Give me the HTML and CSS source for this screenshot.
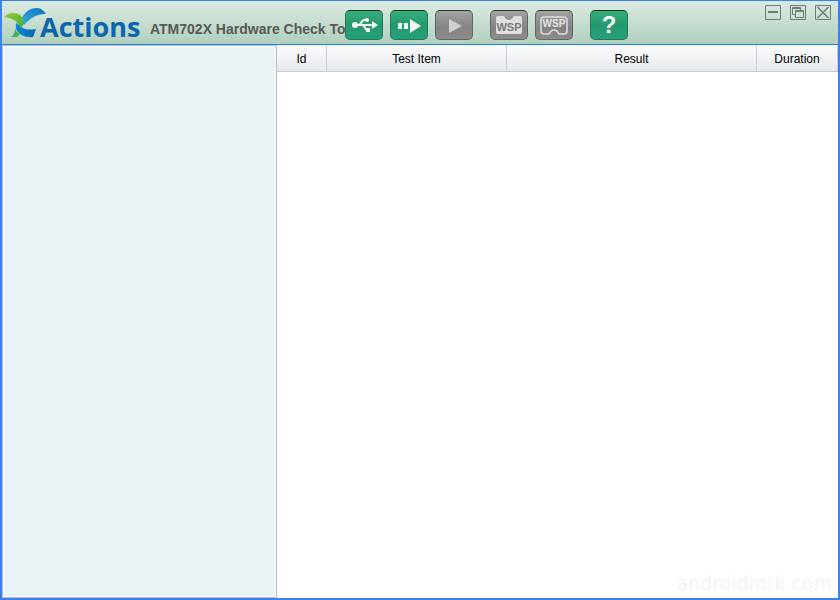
FILE: index.html
```html
<!DOCTYPE html>
<html lang="en">
<head>
<meta charset="utf-8">
<title>ATM702X Hardware Check Tool</title>
<link rel="stylesheet" href="styles.css">
</head>
<body>
<div class="window">
  <header class="titlebar">
    <div class="brand">
      <svg class="brand-mark" width="44" height="34" viewBox="0 0 44 34" aria-hidden="true">
        <defs>
          <linearGradient id="sky" x1="0" y1="1" x2="1" y2="0"><stop offset="0" stop-color="#35aee4"/><stop offset="1" stop-color="#0b73bd"/></linearGradient>
          <linearGradient id="leaf" x1="0" y1="0" x2="1" y2="1"><stop offset="0" stop-color="#9bcb2b"/><stop offset="1" stop-color="#3fae38"/></linearGradient>
          <linearGradient id="sea" x1="0" y1="0" x2="1" y2="0"><stop offset="0" stop-color="#0a86cc"/><stop offset="1" stop-color="#0867ae"/></linearGradient>
        </defs>
        <path d="M19 12C22 4 28 0 35 0C39 0 42 3 44 6C37 6 31 8 25 14L22 17Z" fill="url(#sky)"/>
        <path d="M2 9C7 4 15 4 19 8C22 11 23 15 20 19L17 18C15 12 9 10 2 9Z" fill="url(#leaf)"/>
        <path d="M14 15L19 19C23 22 29 22 34 21L31 29C23 30 12 26 14 15Z" fill="url(#sea)"/>
        <path d="M13 20C14 24 16 25 18 26L15 29L9 29C13 26 13 23 13 20Z" fill="#3db54a"/>
      </svg>
      <span class="brand-name">Actions</span>
    </div>
    <h1 class="title">ATM702X Hardware Check Tool</h1>
    <div class="toolbar">
      <button class="tool" aria-label="USB connect">
        <svg width="38" height="29" viewBox="0 0 38 29" fill="none" stroke="#f1f7f2" stroke-width="2">
          <path d="M10 14H29M13 14C17 14 16 9 19 9H22M17 14C21 14 19 19 22 19"/>
          <circle cx="10" cy="14" r="3" fill="#f1f7f2" stroke="none"/>
          <circle cx="22" cy="9" r="2" fill="#f1f7f2" stroke="none"/>
          <path d="M21 17H25V21H21ZM27 10L33 14L27 18Z" fill="#f1f7f2" stroke="none"/>
        </svg>
      </button>
      <button class="tool" aria-label="Run all">
        <svg width="38" height="29" viewBox="0 0 38 29" fill="#f1f7f2"><path d="M8 12H12V18H8ZM14 12H18V18H14ZM20 8L31 15L20 22Z"/></svg>
      </button>
      <button class="tool tool-off" aria-label="Run">
        <svg width="38" height="29" viewBox="0 0 38 29" fill="#cfcfcf"><path d="M14 8L27 15L14 22Z"/></svg>
      </button>
      <button class="tool tool-off tool-group" aria-label="WSP filled">
        <svg width="38" height="29" viewBox="0 0 38 29"><path d="M8 5H14Q16 9 19 9T24 5H30Q32 5 32 7V21Q32 23 30 23H8Q6 23 6 21V7Q6 5 8 5Z" fill="#dfdfdf"/><text class="chip-text" x="19" y="20" text-anchor="middle" fill="#777">WSP</text></svg>
      </button>
      <button class="tool tool-off" aria-label="WSP outline">
        <svg width="38" height="29" viewBox="0 0 38 29"><path d="M9 6H29Q32 6 32 9V20Q32 23 29 23H24Q22 19 19 19T14 23H9Q6 23 6 20V9Q6 6 9 6Z" fill="none" stroke="#dcdcdc" stroke-width="1.5"/><text class="chip-text chip-small" x="19" y="16" text-anchor="middle" fill="#e4e4e4">WSP</text></svg>
      </button>
      <button class="tool tool-help tool-group" aria-label="Help">?</button>
    </div>
    <div class="controls">
      <button class="control" aria-label="Minimize"><svg width="16" height="15" viewBox="0 0 16 15"><path d="M.5.5H15.5V14.5H.5Z"/><path d="M3 7H13" stroke-width="2"/></svg></button>
      <button class="control" aria-label="Restore"><svg width="16" height="15" viewBox="0 0 16 15"><path d="M.5.5H15.5V14.5H.5ZM5 9.5H2.500V2.500H10.500V5M2.500 3.500H10.500M5.500 5.500H13.500V12.500H5.500ZM5.500 6.500H13.500"/></svg></button>
      <button class="control" aria-label="Close"><svg width="16" height="15" viewBox="0 0 16 15"><path d="M.5.5H15.5V14.5H.5Z"/><path d="M2.500 2L13.500 13M13.500 2L2.500 13" stroke-width="1.5"/></svg></button>
    </div>
  </header>
  <main class="content">
    <aside class="sidebar"></aside>
    <section class="results">
      <table class="grid">
        <colgroup><col class="col-id"><col class="col-item"><col class="col-result"><col></colgroup>
        <thead><tr><th>Id</th><th>Test Item</th><th>Result</th><th>Duration</th></tr></thead>
      </table>
      <p class="watermark">androidmtk.com</p>
    </section>
  </main>
</div>
</body>
</html>
```
FILE: styles.css
```css
* { box-sizing: border-box; }
body { margin: 0; font-family: "Liberation Sans", Arial, sans-serif; }
.window {
  display: flex;
  flex-direction: column;
  min-height: 100vh;
  border: 2px solid #3b82ec;
  border-top-width: 1px;
  background: #fff;
}
.titlebar {
  display: flex;
  height: 44px;
  background: linear-gradient(#dcebe2, #b0cfbd);
  border-bottom: 1px solid #1f83f5;
}
.brand { display: flex; flex: none; width: 148px; }
.brand-mark { flex: none; margin-top: 7px; }
.brand-name {
  margin-left: -6px;
  font: 700 27px/52px "Open Sans", sans-serif;
  color: #0b66ae;
}
.title {
  flex: none;
  width: 195px;
  margin: 0;
  overflow: hidden;
  white-space: nowrap;
  font-size: 14px;
  line-height: 56px;
  color: #595959;
}
.toolbar { display: flex; flex: none; gap: 7px; padding-top: 9px; }
.tool {
  width: 38px;
  height: 30px;
  padding: 0;
  border: 1px solid #23775a;
  border-top-color: #1c3229;
  border-radius: 5px;
  background: linear-gradient(#36ae79, #279970 50%, #25a07a);
  overflow: hidden;
}
.tool svg { display: block; margin: -1px; }
.tool-off { border-color: #666; border-top-color: #333; background: linear-gradient(#a2a2a2, #838383 60%, #8c8c8c); }
.tool-group { margin-left: 10px; }
.tool-help { font: bold 24px/28px "Liberation Sans", sans-serif; color: #f4faf6; }
.chip-text { font: bold 11px "Liberation Sans", sans-serif; }
.chip-small { font-size: 10px; }
.controls { display: flex; gap: 9px; margin-left: auto; padding: 4px 7px 0 0; }
.control { width: 16px; height: 15px; padding: 0; border: 0; background: none; }
.control svg { display: block; fill: none; stroke: #6f7d76; stroke-width: 1; }
.content { display: flex; flex: 1; }
.sidebar {
  flex: none;
  width: 275px;
  border: 1px solid #b8bcc0;
  background: #eaf3f6;
  box-shadow: inset 0 0 0 1px #fff;
}
.results { display: flex; flex: 1; flex-direction: column; justify-content: space-between; }
.grid { width: 100%; table-layout: fixed; border-collapse: separate; border-spacing: 0; }
.col-id { width: 50px; }
.col-item { width: 180px; }
.col-result { width: 250px; }
.grid th {
  height: 27px;
  padding: 1px 0 0;
  border: solid #c5ccd6;
  border-width: 0 1px 1px 0;
  background: linear-gradient(#fcfcfd, #e6e9ee);
  font-size: 12px;
  font-weight: normal;
  color: #000;
}
.watermark {
  margin: 0 6px 2px 0;
  text-align: right;
  font: 19px/26px "DejaVu Sans", sans-serif;
  color: #eff5fb;
}
```
